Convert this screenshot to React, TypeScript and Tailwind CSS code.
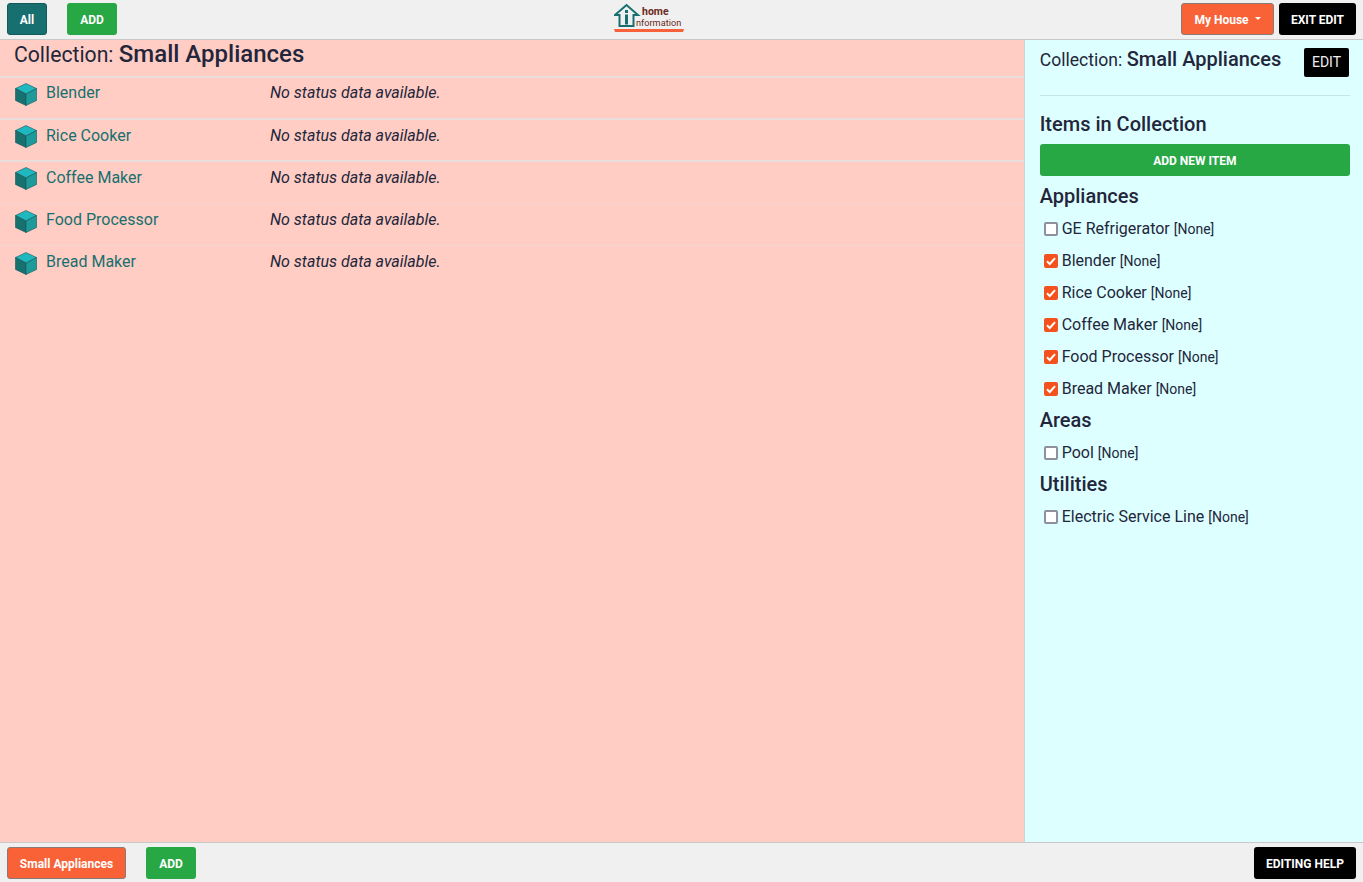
import React from 'react';

const listItems = ['Blender', 'Rice Cooker', 'Coffee Maker', 'Food Processor', 'Bread Maker'];

const sideGroups = [
  { title: 'Appliances', items: [
    { name: 'GE Refrigerator', checked: false },
    { name: 'Blender', checked: true },
    { name: 'Rice Cooker', checked: true },
    { name: 'Coffee Maker', checked: true },
    { name: 'Food Processor', checked: true },
    { name: 'Bread Maker', checked: true },
  ] },
  { title: 'Areas', items: [{ name: 'Pool', checked: false }] },
  { title: 'Utilities', items: [{ name: 'Electric Service Line', checked: false }] },
];

function CubeIcon() {
  return (
    <svg width="22" height="23" viewBox="0 0 22 23" className="shrink-0">
      <polygon points="11,0.500 21.500,5.500 11,11 0.500,5.500" fill="#20b8bf" stroke="#14585c" strokeWidth="0.600" />
      <polygon points="0.500,5.500 11,11 11,22.500 0.500,17.500" fill="#17716f" stroke="#14585c" strokeWidth="0.600" />
      <polygon points="21.500,5.500 11,11 11,22.500 21.500,17.500" fill="#1f9a9a" stroke="#14585c" strokeWidth="0.600" />
    </svg>
  );
}

function Logo() {
  return (
    <div className="relative w-[70px] h-[32px]">
      <svg width="70" height="32" viewBox="0 0 70 32" className="absolute left-0 top-0">
        <path d="M1 15 L12.500 5 L24 15 H19.500 V26 H5.500 V15 Z" fill="none" stroke="#17706f" strokeWidth="2" />
        <rect x="11" y="10" width="3" height="3" fill="#17706f" />
        <rect x="11" y="14.500" width="3" height="10" fill="#17706f" />
        <path d="M0 29 H70 L69 32 H1 Z" fill="#f7623a" />
      </svg>
      <span className="absolute left-[28px] top-[5px] text-[10.500px] leading-[13px] font-bold text-[#6b2a1c]">home</span>
      <span className="absolute left-[22px] top-[17px] text-[9.200px] leading-[12px] text-[#6b2a1c]">nformation</span>
    </div>
  );
}

function CheckBox({ checked }: { checked: boolean }) {
  if (checked) {
    return (
      <span className="w-[14px] h-[14px] rounded-[2px] bg-[#f4511e] flex items-center justify-center shrink-0">
        <svg width="12" height="12" viewBox="0 0 12 12">
          <path d="M2 6.200 L4.800 9 L10 3.200" fill="none" stroke="white" strokeWidth="2" />
        </svg>
      </span>
    );
  }
  return <span className="w-[14px] h-[14px] rounded-[2px] bg-white border-2 border-[#8f8f9d] shrink-0"></span>;
}

export default function App() {
  return (
    <div className="h-[882px] w-[1363px] overflow-hidden flex flex-col text-[#23263b] font-['Roboto',sans-serif]">
      {/* top bar */}
      <div className="h-[40px] shrink-0 bg-[#f0f0f0] border-b border-[#c9c9c9] flex items-center justify-between pl-[7px] pr-[7px] relative">
        <div className="flex gap-[20px] mb-px">
          <button className="w-[40px] h-[32px] pt-px bg-[#17706f] border border-[#125a59] rounded-[3px] text-white text-[12px] font-bold">All</button>
          <button className="w-[50px] h-[32px] pt-px bg-[#28a745] rounded-[3px] text-white text-[12px] font-bold">ADD</button>
        </div>
        <div className="absolute left-[614px] top-0"><Logo /></div>
        <div className="flex gap-[5px] mb-px">
          <button className="w-[93px] h-[32px] pt-px bg-[#f96237] border border-[#8a7a76] rounded-[3px] text-white text-[12px] font-bold flex items-center justify-center gap-[6px]">
            My House
            <span className="w-0 h-0 border-x-[3.500px] border-x-transparent border-t-[3.500px] border-t-white mb-[2px]"></span>
          </button>
          <button className="w-[77px] h-[32px] pt-px bg-black rounded-[3px] text-white text-[12px] font-bold">EXIT EDIT</button>
        </div>
      </div>

      <div className="flex flex-1 min-h-0">
        {/* main list */}
        <div className="flex-1 bg-[#ffcdc4]">
          <div className="h-[38px] pl-[14px] text-[21.200px] leading-[28px] border-b-2 border-[#eadcda]">
            Collection: <span className="font-medium text-[24px]">Small Appliances</span>
          </div>
          {listItems.map((name, i) => (
            <div
              key={name}
              className={
                i < 2
                  ? 'h-[42px] flex border-b-2 border-[#eadcda]'
                  : i < 4
                    ? 'h-[42px] flex border-b border-[#f3d6d0]'
                    : 'h-[42px] flex'
              }
            >
              <div className={i < 3 ? 'w-[270px] pl-[15px] flex items-start gap-[9px] pt-[5px]' : 'w-[270px] pl-[15px] flex items-start gap-[9px] pt-[6px]'}>
                <CubeIcon />
                <a className={i === 0 || i > 2 ? 'text-[16px] leading-[24px] text-[#17706f] -mt-[2px]' : 'text-[16px] leading-[24px] text-[#17706f] -mt-[1px]'}>{name}</a>
              </div>
              <div className={i === 0 ? 'italic text-[16px] leading-[24px] pt-[3px]' : 'italic text-[16px] leading-[24px] pt-[4px]'}>No status data available.</div>
            </div>
          ))}
        </div>

        {/* side panel */}
        <div className="w-[339px] shrink-0 bg-[#ddffff] border-l border-[#c9d6d6] pl-[14.700px] pr-[13px]">
          <div className="flex justify-between pt-[8px] pb-[18px] border-b border-[#c5e3e8]">
            <div className="text-[17.600px] leading-[24px] h-[29px] -mt-px">
              Collection: <span className="font-medium text-[20px]">Small Appliances</span>
            </div>
            <button className="w-[45px] h-[29px] mr-px bg-black text-[#eeeeee] text-[14px] rounded-[2px]">EDIT</button>
          </div>
          <h5 className="text-[20px] leading-[24px] font-medium mt-[16px]">Items in Collection</h5>
          <button className="mt-[8px] w-full h-[32px] pt-px bg-[#28a745] rounded-[3px] text-white text-[12px] font-bold">ADD NEW ITEM</button>
          {sideGroups.map((group, i) => (
            <div key={group.title} className={i === 0 ? 'mt-[8px]' : 'mt-[3px]'}>
              <h5 className="text-[20px] leading-[24px] font-medium mb-[5px]">{group.title}</h5>
              {group.items.map(item => (
                <div key={item.name} className="h-[32px] flex items-center pl-[4px] gap-[4px]">
                  <CheckBox checked={item.checked} />
                  <span className="text-[16px]">{item.name}</span>
                  <span className="text-[14px]">[None]</span>
                </div>
              ))}
            </div>
          ))}
        </div>
      </div>

      {/* bottom bar */}
      <div className="h-[40px] shrink-0 bg-[#f0f0f0] border-t border-[#c9c9c9] flex items-center justify-between px-[7px]">
        <div className="flex gap-[20px]">
          <button className="w-[119px] h-[32px] pt-[2px] bg-[#f96237] border border-[#8a7a76] rounded-[3px] text-white text-[12px] font-bold">Small Appliances</button>
          <button className="w-[50px] h-[32px] pt-[2px] bg-[#28a745] rounded-[3px] text-white text-[12px] font-bold">ADD</button>
        </div>
        <button className="w-[102px] h-[32px] pt-[2px] bg-black rounded-[3px] text-white text-[12px] font-bold">EDITING HELP</button>
      </div>
    </div>
  );
}
